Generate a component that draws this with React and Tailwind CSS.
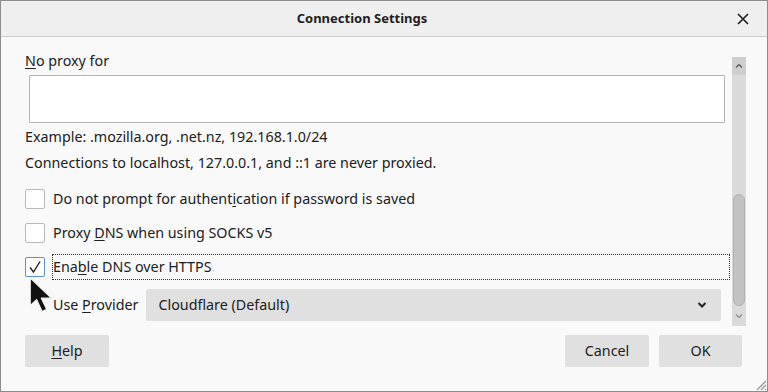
import React from 'react';

const Check = ({ checked }) => (
  <span
    className={`w-[20px] h-[20px] shrink-0 rounded-[2px] border bg-white flex items-center justify-center ${
      checked ? 'border-[#5a8fd0]' : 'border-[#b8b8b8]'
    }`}
  >
    {checked && (
      <svg width="16" height="16" viewBox="0 0 16 16">
        <path d="M3 8.5 L6.5 13 L13 2.5" fill="none" stroke="#222" strokeWidth="1.4" />
      </svg>
    )}
  </span>
);

const U = ({ children }) => <span className="underline underline-offset-2">{children}</span>;

export default function App() {
  return (
    <div className="relative w-[768px] h-[392px] flex flex-col bg-[#f9f9f9] border border-[#8c8c8c] overflow-hidden font-['Noto_Sans',sans-serif] text-[14.3px] text-[#202020]">
      {/* Title bar */}
      <div className="relative h-[36px] shrink-0 bg-[#efefef] border-b border-[#cdcdcd] flex items-center justify-center pr-[44px]">
        <span className="text-[13px] font-bold text-[#1e1e1e]">Connection Settings</span>
        <svg className="absolute right-[18px] top-[12px]" width="12" height="12" viewBox="0 0 12 12">
          <path d="M1 1 L11 11 M11 1 L1 11" stroke="#222" strokeWidth="1.7" />
        </svg>
      </div>

      {/* Scroll area */}
      <div className="flex h-[290px] shrink-0">
        <div className="flex-1 pl-[24px] flex flex-col">
          <div className="mt-[14px] h-[20px] leading-[20px]">
            <U>N</U>o proxy for
          </div>
          <div className="mt-[4px] ml-[4px] mr-[5px] h-[48px] bg-white border border-[#b5b5b5] rounded-[1px]" />
          <div className="mt-[4px] h-[20px] leading-[20px]">Example: .mozilla.org, .net.nz, 192.168.1.0/24</div>
          <div className="mt-[6px] h-[20px] leading-[20px]">Connections to localhost, 127.0.0.1, and ::1 are never proxied.</div>

          <div className="mt-[13px] flex flex-col gap-[8px]">
            <div className="h-[26px] flex items-center gap-[7px]">
              <Check />
              <span className="flex-1 h-[26px] leading-[24px] border border-transparent">
                Do not prompt for authent<U>i</U>cation if password is saved
              </span>
            </div>
            <div className="h-[26px] flex items-center gap-[7px]">
              <Check />
              <span className="flex-1 h-[26px] leading-[24px] border border-transparent">
                Proxy <U>D</U>NS when using SOCKS v5
              </span>
            </div>
            <div className="h-[26px] flex items-center gap-[7px]">
              <Check checked />
              <span className="flex-1 h-[26px] leading-[24px] border border-dotted border-[#333]">
                Ena<U>b</U>le DNS over HTTPS
              </span>
            </div>
          </div>

          <div className="mt-[9px] ml-[28px] mr-[9px] flex items-center gap-[8px]">
            <span>Use <U>P</U>rovider</span>
            <div className="flex-1 h-[32px] bg-[#e0e0e0] rounded-[2px] flex items-center justify-between pl-[12px] pr-[14px]">
              <span>Cloudflare (Default)</span>
              <svg width="10" height="8" viewBox="0 0 10 8">
                <path d="M1.5 2 L5 5.5 L8.5 2" fill="none" stroke="#222" strokeWidth="2" />
              </svg>
            </div>
          </div>
        </div>

        {/* Scrollbar */}
        <div className="w-[14px] mt-[20px] mb-[1px] mr-[21px] ml-[2px] bg-[#dadada] flex flex-col items-center">
          <div className="h-[18px] w-full bg-[#cecece] flex items-center justify-center">
            <svg width="8" height="6" viewBox="0 0 8 6">
              <path d="M1 4.5 L4 1.5 L7 4.5" fill="none" stroke="#555" strokeWidth="1.2" />
            </svg>
          </div>
          <div className="flex-1" />
          <div className="h-[112px] w-[12px] rounded-full bg-[#c2c2c2] border border-[#b3b3b3]" />
          <div className="h-[20px] w-full flex items-center justify-center">
            <svg width="8" height="6" viewBox="0 0 8 6">
              <path d="M1 1.5 L4 4.5 L7 1.5" fill="none" stroke="#888" strokeWidth="1.2" />
            </svg>
          </div>
        </div>
      </div>

      {/* Footer */}
      <div className="flex items-start justify-between pl-[24px] pr-[25px] pt-[8px]">
        <button className="w-[84px] h-[32px] bg-[#e0e0e0] rounded-[2px]">
          <U>H</U>elp
        </button>
        <div className="flex gap-[10px]">
          <button className="w-[84px] h-[32px] bg-[#e0e0e0] rounded-[2px]">Cancel</button>
          <button className="w-[83px] h-[32px] bg-[#e0e0e0] rounded-[2px]">OK</button>
        </div>
      </div>

      {/* Resize grip */}
      <svg className="absolute right-0 bottom-0" width="14" height="14" viewBox="0 0 14 14">
        <path d="M13 4 L4 13 M13 8 L8 13 M13 12 L12 13" stroke="#9a9a9a" strokeWidth="1.3" />
      </svg>

      {/* Mouse cursor */}
      <svg className="absolute left-[27px] top-[275px]" width="28" height="40" viewBox="0 0 26 36">
        <path
          d="M2 1 L2 27 L8 21.5 L13 32.5 L17.5 30.5 L12.5 20 L22 20 Z"
          fill="#111"
          stroke="#f4f4f4"
          strokeWidth="1.3"
          strokeLinejoin="round"
        />
      </svg>
    </div>
  );
}
